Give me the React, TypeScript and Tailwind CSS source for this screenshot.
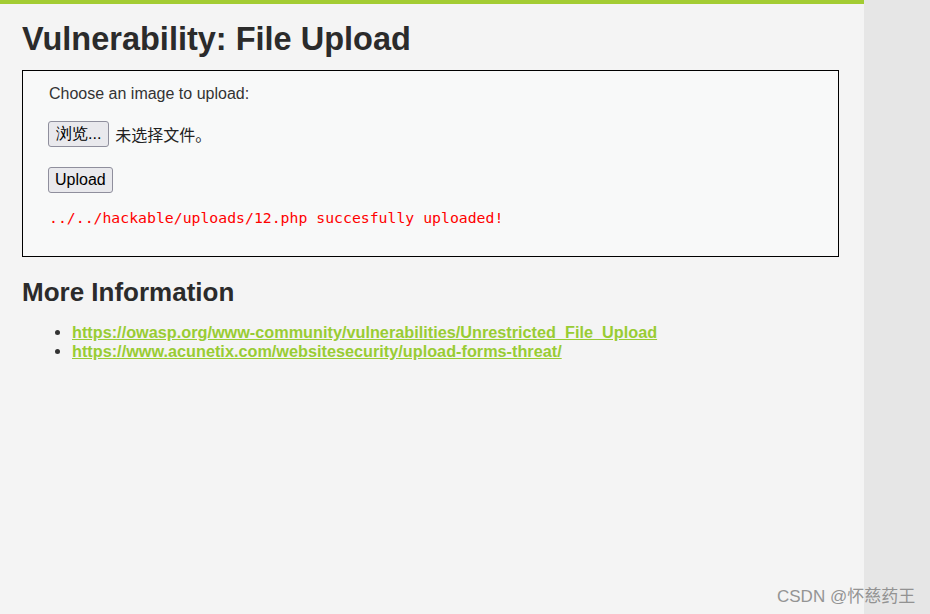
const links = [
  "https://owasp.org/www-community/vulnerabilities/Unrestricted_File_Upload",
  "https://www.acunetix.com/websitesecurity/upload-forms-threat/",
];

const btn =
  "rounded-[3px] border border-[#8f8f9d] bg-[#e9e9ed] px-[6px] text-[16px] leading-[24px] text-black";

export default function App() {
  return (
    <div className="flex h-[614px] w-[930px] overflow-hidden bg-[#e6e6e6] font-['Liberation_Sans',Arial,sans-serif] text-[#333]">
      <div className="relative h-full w-[864px] bg-[#f4f4f4]">
        <div className="h-[4px] bg-[#a3cc33]" />
        <div className="pl-[22px] pr-[26px]">
          <h1 className="mt-[16px] text-[32.5px] font-bold leading-[38px] text-[#2b2b2b]">
            Vulnerability: File Upload
          </h1>
          <div className="mt-[12px] h-[187px] w-[817px] border border-black bg-[#f8f9f9] pl-[25px] pt-[13px]">
            <p className="pl-[1px] text-[16px] leading-[19px]">Choose an image to upload:</p>
            <div className="mt-[18px] flex items-center gap-[6px]">
              <button className={`${btn} px-[7px]`}>浏览...</button>
              <span className="font-['Noto_Sans_CJK_SC',sans-serif] text-[16px] text-[#222]">未选择文件。</span>
            </div>
            <button className={`${btn} mt-[20px]`}>Upload</button>
            <p className="mt-[16px] pl-[1px] whitespace-pre font-['DejaVu_Sans_Mono','Liberation_Mono',monospace] text-[14.8px] leading-[18px] text-[#ff0000]">
              ../../hackable/uploads/12.php succesfully uploaded!
            </p>
          </div>
          <h2 className="mt-[20px] text-[26px] font-bold leading-[30px] text-[#2b2b2b]">More Information</h2>
          <ul className="mt-[16px] list-disc pl-[50px] text-[16.25px] leading-[19px]">
            {links.map((l) => (
              <li key={l}>
                <a href={l} className="font-bold text-[#99cc33] underline">
                  {l}
                </a>
              </li>
            ))}
          </ul>
        </div>
      </div>
      <div className="absolute left-[777px] top-[584px] font-['Liberation_Sans','Noto_Sans_CJK_SC',sans-serif] text-[17px] text-[#8a8a8a] opacity-90">
        CSDN @怀慈药王
      </div>
    </div>
  );
}
